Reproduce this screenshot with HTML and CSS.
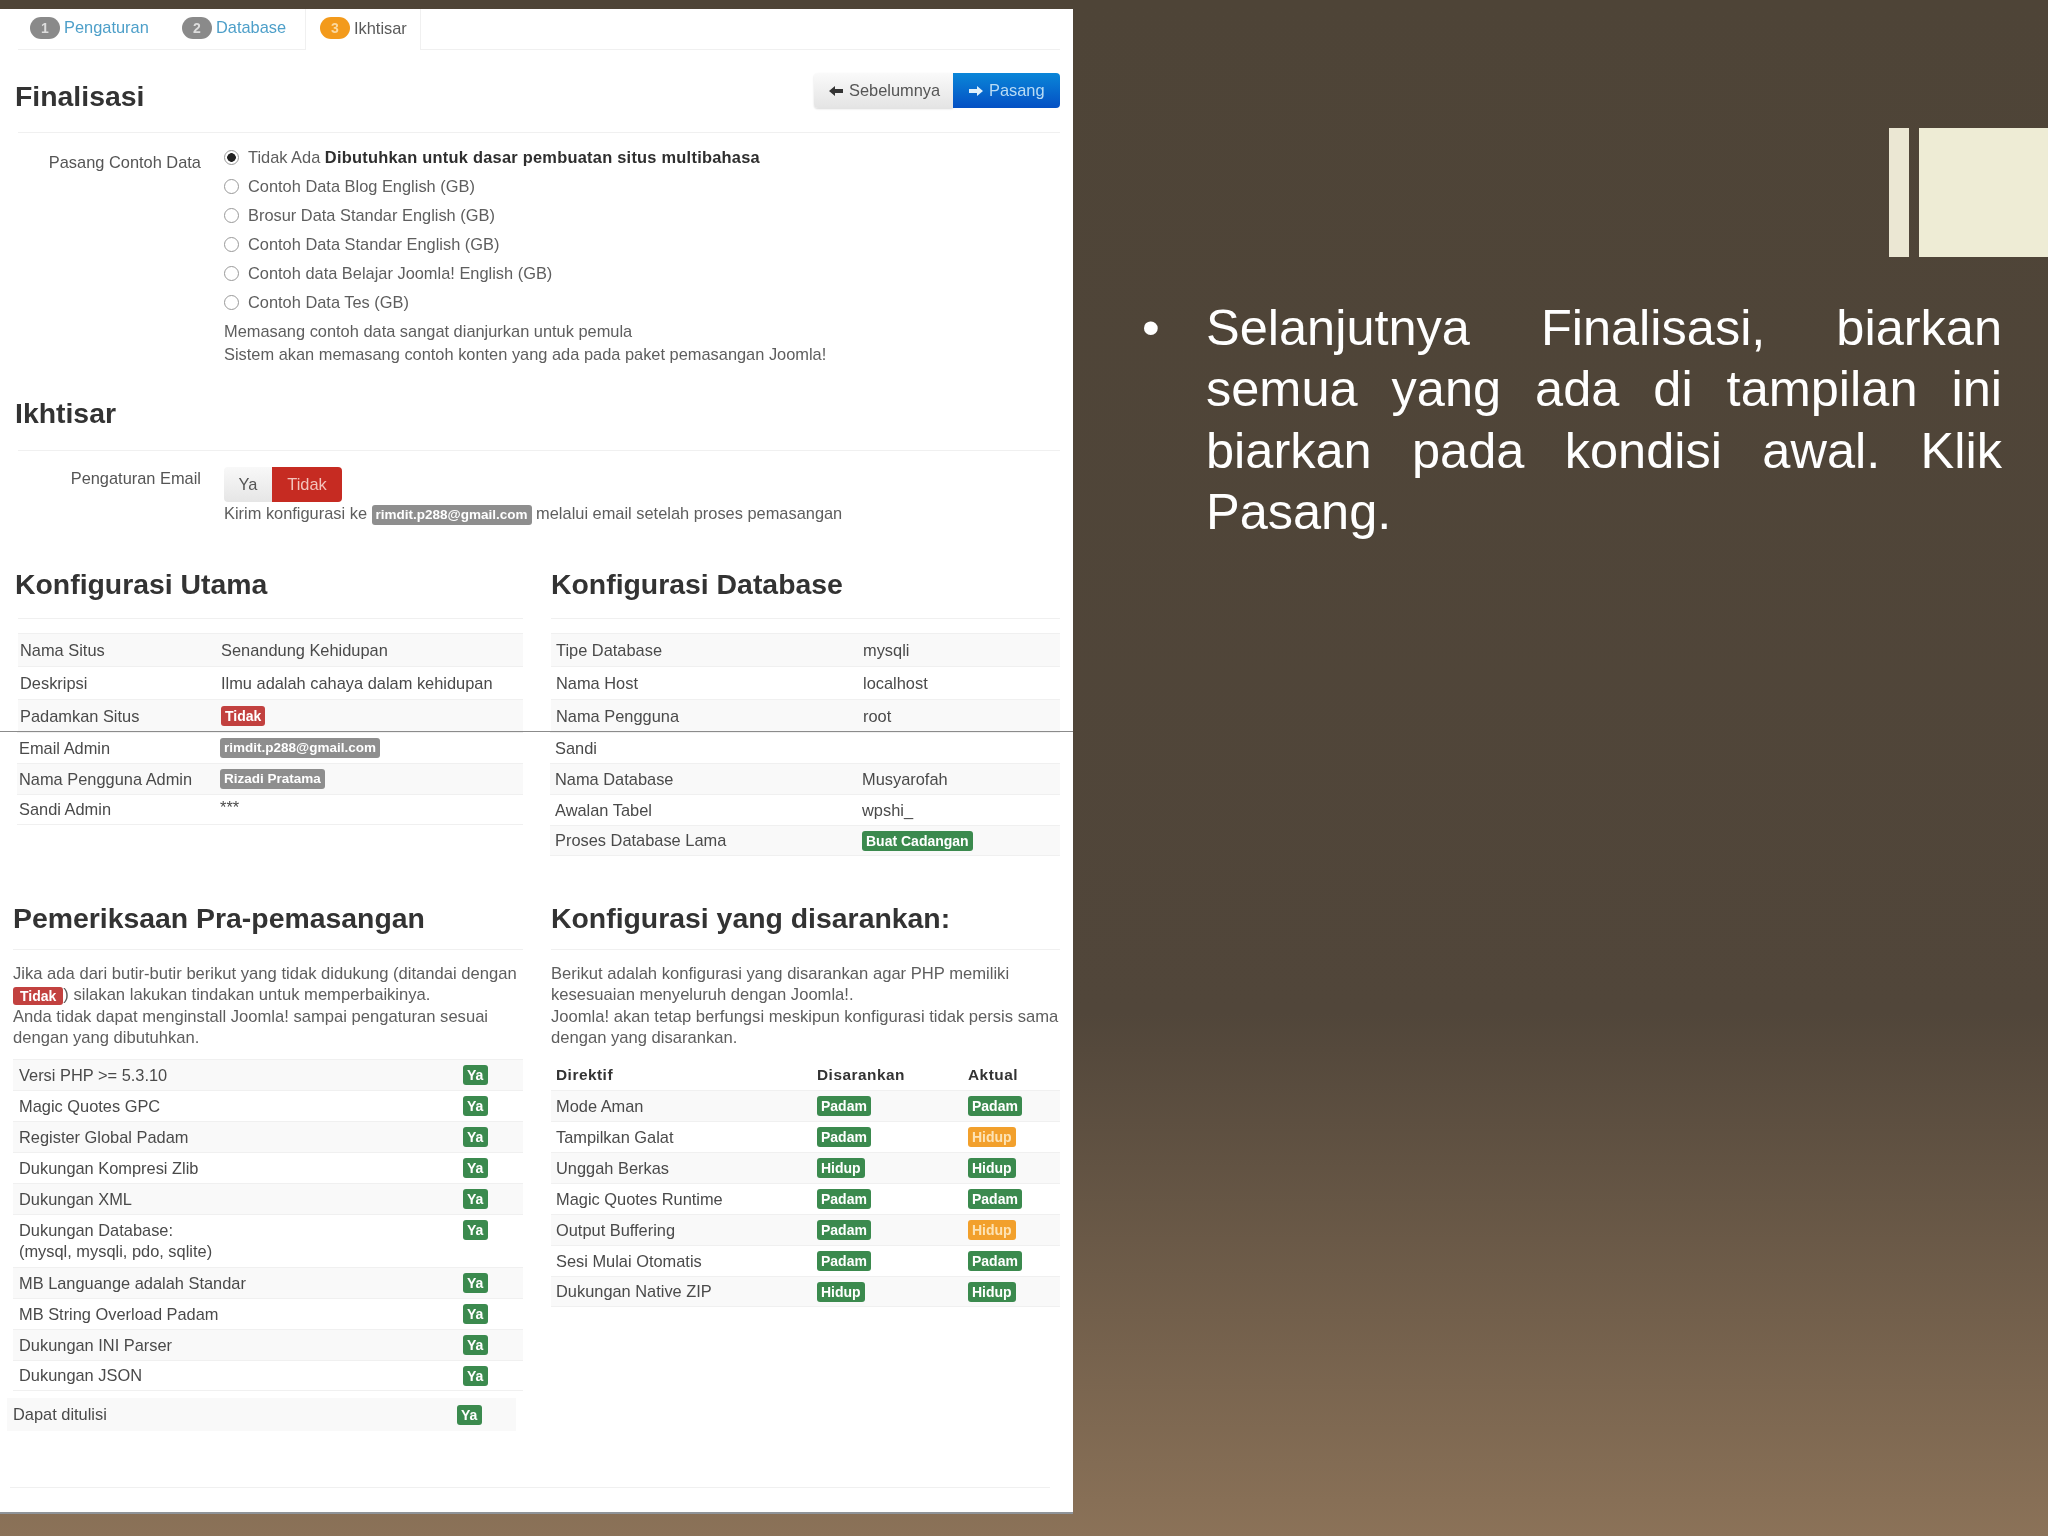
FILE: index.html
```html
<!DOCTYPE html>
<html lang="id">
<head>
<meta charset="utf-8">
<title>Finalisasi</title>
<link rel="stylesheet" href="styles.css">
</head>
<body>
<main class="slide">
  <section class="panel">
    <nav class="tabs">
      <a class="tab tab-one"><span class="step">1</span>Pengaturan</a>
      <a class="tab tab-two"><span class="step">2</span>Database</a>
      <a class="tab tab-active"><span class="step step-on">3</span>Ikhtisar</a>
    </nav>

    <header class="page-head">
      <h1 class="title title-main">Finalisasi</h1>
      <div class="actions">
        <a class="btn btn-prev"><svg class="arrow" viewBox="0 0 14 12"><path d="M0 6 6 1v3h8v4H6v3z"/></svg>Sebelumnya</a>
        <a class="btn btn-next"><svg class="arrow" viewBox="0 0 14 12"><path d="M14 6 8 1v3H0v4h8v3z"/></svg>Pasang</a>
      </div>
    </header>

    <div class="form-group group-sample">
      <div class="label">Pasang Contoh Data</div>
      <div class="controls">
        <label class="radio"><input type="radio" name="s" checked>Tidak Ada&nbsp;<b>Dibutuhkan untuk dasar pembuatan situs multibahasa</b></label>
        <label class="radio"><input type="radio" name="s">Contoh Data Blog English (GB)</label>
        <label class="radio"><input type="radio" name="s">Brosur Data Standar English (GB)</label>
        <label class="radio"><input type="radio" name="s">Contoh Data Standar English (GB)</label>
        <label class="radio"><input type="radio" name="s">Contoh data Belajar Joomla! English (GB)</label>
        <label class="radio"><input type="radio" name="s">Contoh Data Tes (GB)</label>
        <p class="help">Memasang contoh data sangat dianjurkan untuk pemula</p>
        <p class="help">Sistem akan memasang contoh konten yang ada pada paket pemasangan Joomla!</p>
      </div>
    </div>

    <h2 class="title title-overview">Ikhtisar</h2>

    <div class="form-group group-email">
      <div class="label">Pengaturan Email</div>
      <div class="controls">
        <div class="toggle"><span class="toggle-yes">Ya</span><span class="toggle-no">Tidak</span></div>
        <p class="help help-email">Kirim konfigurasi ke <span class="badge grey">rimdit.p288@gmail.com</span> melalui email setelah proses pemasangan</p>
      </div>
    </div>

    <div class="columns columns-config">
      <div class="col">
        <h2 class="title title-col">Konfigurasi Utama</h2>
        <div class="rows rows-main">
          <div class="row tall zebra"><span>Nama Situs</span><span>Senandung Kehidupan</span></div>
          <div class="row tall"><span>Deskripsi</span><span>Ilmu adalah cahaya dalam kehidupan</span></div>
          <div class="row tall zebra"><span>Padamkan Situs</span><span><i class="badge red">Tidak</i></span></div>
          <div class="row low"><span>Email Admin</span><span><i class="badge grey">rimdit.p288@gmail.com</i></span></div>
          <div class="row low zebra"><span>Nama Pengguna Admin</span><span><i class="badge grey">Rizadi Pratama</i></span></div>
          <div class="row low"><span>Sandi Admin</span><span class="stars">***</span></div>
        </div>
      </div>
      <div class="col">
        <h2 class="title title-col">Konfigurasi Database</h2>
        <div class="rows rows-db">
          <div class="row tall zebra"><span>Tipe Database</span><span>mysqli</span></div>
          <div class="row tall"><span>Nama Host</span><span>localhost</span></div>
          <div class="row tall zebra"><span>Nama Pengguna</span><span>root</span></div>
          <div class="row low"><span>Sandi</span><span></span></div>
          <div class="row low zebra"><span>Nama Database</span><span>Musyarofah</span></div>
          <div class="row low"><span>Awalan Tabel</span><span>wpshi_</span></div>
          <div class="row low zebra"><span>Proses Database Lama</span><span><i class="badge green">Buat Cadangan</i></span></div>
        </div>
      </div>
    </div>

    <div class="columns columns-check">
      <div class="col">
        <h2 class="title title-col title-check">Pemeriksaan Pra-pemasangan</h2>
        <p class="para">Jika ada dari butir-butir berikut yang tidak didukung (ditandai dengan <i class="badge red">Tidak</i>) silakan lakukan tindakan untuk memperbaikinya.<br>Anda tidak dapat menginstall Joomla! sampai pengaturan sesuai dengan yang dibutuhkan.</p>
        <div class="rows rows-check">
          <div class="row zebra"><span>Versi PHP &gt;= 5.3.10</span><i class="badge green">Ya</i></div>
          <div class="row"><span>Magic Quotes GPC</span><i class="badge green">Ya</i></div>
          <div class="row zebra"><span>Register Global Padam</span><i class="badge green">Ya</i></div>
          <div class="row"><span>Dukungan Kompresi Zlib</span><i class="badge green">Ya</i></div>
          <div class="row zebra"><span>Dukungan XML</span><i class="badge green">Ya</i></div>
          <div class="row row-double"><span>Dukungan Database:<br>(mysql, mysqli, pdo, sqlite)</span><i class="badge green">Ya</i></div>
          <div class="row zebra"><span>MB Languange adalah Standar</span><i class="badge green">Ya</i></div>
          <div class="row"><span>MB String Overload Padam</span><i class="badge green">Ya</i></div>
          <div class="row zebra"><span>Dukungan INI Parser</span><i class="badge green">Ya</i></div>
          <div class="row"><span>Dukungan JSON</span><i class="badge green">Ya</i></div>
        </div>
        <div class="row row-write zebra"><span>Dapat ditulisi</span><i class="badge green">Ya</i></div>
      </div>
      <div class="col">
        <h2 class="title title-col">Konfigurasi yang disarankan:</h2>
        <p class="para">Berikut adalah konfigurasi yang disarankan agar PHP memiliki kesesuaian menyeluruh dengan Joomla!.<br>Joomla! akan tetap berfungsi meskipun konfigurasi tidak persis sama dengan yang disarankan.</p>
        <div class="rows rows-rec">
          <div class="row row-head"><span>Direktif</span><span>Disarankan</span><span>Aktual</span></div>
          <div class="row zebra"><span>Mode Aman</span><span><i class="badge green">Padam</i></span><span><i class="badge green">Padam</i></span></div>
          <div class="row"><span>Tampilkan Galat</span><span><i class="badge green">Padam</i></span><span><i class="badge orange">Hidup</i></span></div>
          <div class="row zebra"><span>Unggah Berkas</span><span><i class="badge green">Hidup</i></span><span><i class="badge green">Hidup</i></span></div>
          <div class="row"><span>Magic Quotes Runtime</span><span><i class="badge green">Padam</i></span><span><i class="badge green">Padam</i></span></div>
          <div class="row zebra"><span>Output Buffering</span><span><i class="badge green">Padam</i></span><span><i class="badge orange">Hidup</i></span></div>
          <div class="row"><span>Sesi Mulai Otomatis</span><span><i class="badge green">Padam</i></span><span><i class="badge green">Padam</i></span></div>
          <div class="row zebra"><span>Dukungan Native ZIP</span><span><i class="badge green">Hidup</i></span><span><i class="badge green">Hidup</i></span></div>
        </div>
      </div>
    </div>
    <div class="seam"></div>
    <div class="foot-rule"></div>
  </section>

  <div class="deco deco-thin"></div>
  <div class="deco deco-wide"></div>

  <ul class="bullets">
    <li>Selanjutnya Finalisasi, biarkan semua yang ada di tampilan ini biarkan pada kondisi awal. Klik Pasang.</li>
  </ul>
</main>
</body>
</html>
```
FILE: styles.css
```css
* { box-sizing: border-box; }
html, body { margin: 0; padding: 0; }
body { width: 2048px; height: 1536px; overflow: hidden; font-family: "Liberation Sans", Arial, sans-serif; }

.slide {
  position: relative;
  width: 2048px;
  height: 1536px;
  background: linear-gradient(180deg, #4e4437 0%, #51463a 66%, #8b7258 100%);
}

/* pasted screenshot on the slide */
.panel {
  position: absolute;
  left: 0;
  top: 9px;
  width: 1073px;
  height: 1505px;
  padding: 0 13px 0 18px;
  background: #fff;
  border-bottom: 2px solid #8f9499;
  color: #4a4a4a;
  font-size: 16.4px;
  filter: blur(0.75px);
}

.tabs { display: flex; height: 41px; border-bottom: 1px solid #f0f0f0; }
.tab { display: flex; align-items: center; height: 40px; padding-bottom: 3px; color: #4d9fc9; }
.tab-one { margin-left: 12px; width: 152px; }
.tab-two { width: 123px; }
.tab-active { width: 116px; padding-left: 14px; height: 41px; background: #fff; color: #5a5a5a; border: 1px solid #f0f0f0; border-width: 0 1px; }
.step {
  display: flex; align-items: center; justify-content: center;
  width: 30px; height: 22px; margin-right: 4px;
  border-radius: 11px; background: #8a8a8a; color: #ddd; font-size: 14px; font-weight: bold;
}
.step-on { background: #f39a1b; color: #fbd9a0; }

.title { margin: 0; color: #333; font-weight: bold; font-size: 28.4px; line-height: 34px; }

.page-head { display: flex; justify-content: space-between; height: 83px; border-bottom: 1px solid #f0f0f0; }
.title-main { margin: 29px 0 0 -3px; }
.actions { display: flex; height: 35px; margin-top: 23px; }
.btn { display: flex; align-items: center; height: 35px; }
.btn-prev { width: 139px; padding-left: 15px; color: #555; background: linear-gradient(#fafafa, #e4e4e4); border-radius: 4px 0 0 4px; box-shadow: 0 1px 2px rgba(0,0,0,.15); }
.btn-next { width: 107px; padding-left: 16px; color: #b9dcf5; background: linear-gradient(#0a86d8, #0450c4); border-radius: 0 4px 4px 0; }
.arrow { width: 14px; height: 12px; margin-right: 6px; fill: currentColor; }
.btn-prev .arrow { fill: #333; }
.btn-next .arrow { fill: #dff0fb; }

.form-group { display: grid; grid-template-columns: 183px 1fr; column-gap: 23px; }
.label { text-align: right; color: #555; }
.group-sample { padding-top: 10px; }
.group-sample .label { padding-top: 10px; }
.radio { display: flex; align-items: center; height: 29px; color: #5e5e5e; }
.radio b { color: #2e2e2e; letter-spacing: .25px; font-weight: bold; }
.radio input {
  appearance: none; flex: none;
  width: 15px; height: 15px; margin: 0 9px 0 0;
  border: 1px solid #999; border-radius: 50%; background: #fff;
}
.radio input:checked { background: radial-gradient(circle, #222 0 4px, #fff 4.6px); }
.help { margin: 0; line-height: 23px; color: #5e5e5e; }
.group-sample .help:first-of-type { margin-top: 3px; }

.title-overview { padding: 30px 0 20px; margin-left: -3px; height: 85px; position: relative; }
.title-overview::after { content: ""; position: absolute; left: 3px; right: 0; bottom: 0; border-bottom: 1px solid #f0f0f0; }
.group-email { padding-top: 16px; }
.group-email .label { padding-top: 2px; }
.toggle { display: flex; width: 118px; height: 35px; }
.toggle-yes { width: 48px; display: flex; align-items: center; justify-content: center; background: linear-gradient(#f8f8f8, #e6e6e6); border-radius: 4px 0 0 4px; color: #555; }
.toggle-no { width: 70px; display: flex; align-items: center; justify-content: center; background: #c62b22; color: #f3c4bd; border-radius: 0 4px 4px 0; }
.help-email { height: 23px; line-height: 23px; }

.badge {
  display: inline-block; height: 20px; padding: 0 4px; border-radius: 3px;
  color: #fff; font-style: normal; font-weight: bold; font-size: 14px; line-height: 20px; vertical-align: middle;
}
.grey { background: #8e8e8e; font-size: 13.5px; }
.red { background: #c2413f; }
.green { background: #3b8a4e; }
.orange { background: #f2a02c; color: #fde3b5; }

.columns { display: grid; column-gap: 28px; }
.columns-config { grid-template-columns: 505px 509px; height: 331px; }
.columns-check { grid-template-columns: 510px 509px; margin-left: -5px; }

.title-col { padding: 42px 0 17px; height: 94px; border-bottom: 1px solid #f0f0f0; }
.columns-config .col:first-child .title-col { text-indent: -3px; }
.columns-check .title-col { padding-top: 45px; padding-bottom: 15px; }

.rows-main, .rows-db { margin-top: 14px; }
.row { display: grid; align-items: center; border-top: 1px solid #f0f0f0; padding-left: 2px; height: 31px; }
.tall { height: 33px; }
.low { margin-left: -1px; }
.zebra { background: #f9f9f9; }
.rows-main .row { grid-template-columns: 201px 1fr; }
.rows-db .row { grid-template-columns: 307px 1fr; padding-left: 5px; }
.rows .row:last-child { border-bottom: 1px solid #f0f0f0; }
.stars { align-self: start; padding-top: 3px; }

.para { margin: 13px 0 11px; font-size: 16.6px; line-height: 21.3px; color: #5e5e5e; height: 85px; }
.para .badge { height: 18px; line-height: 18px; padding: 0 7px; }

.rows-check .row, .row-write { grid-template-columns: 444px 1fr; padding-left: 6px; }
.rows-check .badge, .row-write .badge { width: 25px; justify-self: start; }
.row-double { height: 53px; line-height: 21px; align-items: start; padding-top: 5px; }
.row-write { width: 509px; height: 33px; margin: 7px 0 0 -6px; padding-left: 6px; border: 0; }
.rows-rec .row { grid-template-columns: 261px 151px 1fr; padding-left: 5px; }
.row-head { color: #333; font-weight: bold; font-size: 15.4px; letter-spacing: .5px; border-top: 0; }

.seam { position: absolute; left: 0; right: 0; top: 722px; border-top: 1px solid #8b8b8b; }
.foot-rule { position: absolute; left: 10px; width: 1040px; top: 1478px; border-top: 1px solid #f0f0f0; }

.deco { position: absolute; top: 128px; height: 129px; }
.deco-thin { left: 1889px; width: 20px; background: #ebe7d3; }
.deco-wide { left: 1919px; width: 129px; background: #eeecd5; }

.bullets {
  position: absolute; left: 1206px; top: 297px; width: 796px; margin: 0; padding: 0;
  list-style: none; color: #fff; font-size: 50.5px; line-height: 61.4px; text-align: justify;
}
.bullets li { position: relative; }
.bullets li::before { content: "•"; position: absolute; left: -64px; }
```
